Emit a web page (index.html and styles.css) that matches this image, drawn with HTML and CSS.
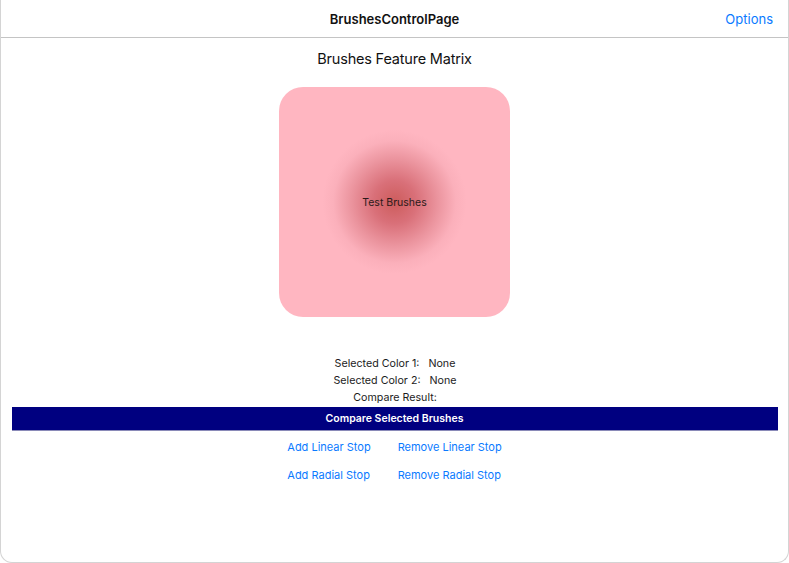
FILE: index.html
```html
<!DOCTYPE html>
<html>
<head>
<meta charset="utf-8">
<link rel="stylesheet" href="styles.css">
</head>
<body>
<div class="window">
  <header class="navbar">
    <div class="nav-title">BrushesControlPage</div>
    <div class="nav-action">Options</div>
  </header>
  <main class="content">
    <h1 class="page-title">Brushes Feature Matrix</h1>
    <div class="brush-box">
      <span class="brush-label">Test Brushes</span>
    </div>
    <div class="info">
      <div class="info-row"><span>Selected Color 1:</span><span>None</span></div>
      <div class="info-row"><span>Selected Color 2:</span><span>None</span></div>
      <div class="info-row"><span>Compare Result:</span></div>
    </div>
    <button class="compare-btn">Compare Selected Brushes</button>
    <div class="stops">
      <span class="link">Add Linear Stop</span>
      <span class="link">Remove Linear Stop</span>
      <span class="link">Add Radial Stop</span>
      <span class="link">Remove Radial Stop</span>
    </div>
  </main>
</div>
</body>
</html>
```
FILE: styles.css
```css
* { box-sizing: border-box; }
html, body { margin: 0; padding: 0; background: #fff; }
body {
  font-family: "Inter", "Liberation Sans", sans-serif;
  color: #1c1c1c;
  width: 789px;
  height: 563px;
  overflow: hidden;
}
.window {
  width: 789px;
  height: 563px;
  border: 1px solid #d4d4d4;
  border-top: none;
  border-radius: 0 0 12px 12px;
  overflow: hidden;
  position: relative;
}
.navbar {
  height: 38px;
  border-bottom: 1px solid #c4c4c4;
  display: flex;
  align-items: center;
  justify-content: center;
  position: relative;
}
.nav-title {
  font-size: 13px;
  font-weight: 600;
  color: #111;
}
.nav-action {
  position: absolute;
  right: 15px;
  top: 11px;
  font-size: 13px;
  color: #0a7aff;
}
.content {
  display: flex;
  flex-direction: column;
  align-items: center;
}
.page-title {
  margin: 11px 0 0;
  font-size: 14.5px;
  letter-spacing: -0.2px;
  font-weight: 400;
  color: #111;
  line-height: 20px;
}
.brush-box {
  margin-top: 18px;
  width: 231px;
  height: 230px;
  border-radius: 24px;
  background: radial-gradient(circle 72px at 50% 50%, #cd5c5c 0%, #d97079 30%, #eb949e 60%, #fbb0bb 85%, #ffb6c1 100%);
  display: flex;
  align-items: center;
  justify-content: center;
}
.brush-label {
  font-size: 10.5px;
  color: #2a1a1a;
  margin-top: 1px;
}
.info {
  margin-top: 38px;
  display: flex;
  flex-direction: column;
  align-items: center;
  font-size: 10.7px;
  color: #1c1c1c;
  margin-left: 1px;
}
.info-row {
  height: 17px;
  line-height: 17px;
  display: flex;
  gap: 9px;
}
.compare-btn {
  margin-top: 1px;
  width: 766px;
  height: 24px;
  background: #000080;
  border: none;
  border-bottom: 1px solid #8a8ab8;
  color: #fff;
  font-family: inherit;
  font-size: 10.5px;
  font-weight: 600;
  padding: 0;
}
.stops {
  margin-top: 9px;
  display: grid;
  grid-template-columns: auto auto;
  column-gap: 27px;
  row-gap: 14px;
  font-size: 11px;
  color: #0a7aff;
  line-height: 14px;
}
```
